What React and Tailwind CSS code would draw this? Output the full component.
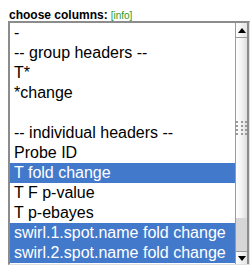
const options = [
  { label: "-" },
  { label: "-- group headers --" },
  { label: "T*" },
  { label: "*change" },
  { label: "\u00a0" },
  { label: "-- individual headers --" },
  { label: "Probe ID" },
  { label: "T fold change", selected: true },
  { label: "T F p-value" },
  { label: "T p-ebayes" },
  { label: "swirl.1.spot.name fold change", selected: true },
  { label: "swirl.2.spot.name fold change", selected: true },
]

export default function App() {
  return (
    <div
      className="w-[252px] h-[272px] bg-white overflow-hidden pl-[8px]"
      style={{ fontFamily: '"Liberation Sans", Arial, sans-serif' }}
    >
      {/* title */}
      <div className="h-[21px] flex items-end gap-[3px] pl-[1px]">
        <span className="text-[12px] leading-none font-bold text-black">choose columns:</span>
        <span className="text-[10px] leading-none text-[#1f9a1f]">[info]</span>
      </div>

      {/* select box */}
      <div className="w-[242px] h-[244px] flex border-t-2 border-l-2 border-[#8c8c8c] border-r border-b border-r-[#e0e0e0] border-b-[#e0e0e0]">
        <div className="flex-1 overflow-hidden">
          {options.map((o, i) => (
            <div
              key={i}
              className={
                "h-[20px] leading-[20px] text-[16px] pl-[4px] whitespace-nowrap " +
                (o.selected ? "bg-[#4279cb] text-white" : "text-black")
              }
            >
              {o.label}
            </div>
          ))}
        </div>

        {/* scrollbar */}
        <div className="w-[14px] flex flex-col border-l border-[#9a9a9a] border-r-2 border-r-[#8c8c8c]">
          <div className="h-[15px] flex items-center justify-center bg-gradient-to-r from-white to-[#e4e4e4] border-b border-[#9a9a9a]">
            <svg width="8" height="5" viewBox="0 0 8 5">
              <path d="M0 5 L4 0 L8 5 Z" fill="#000" />
            </svg>
          </div>
          <div className="h-[180px] flex items-center justify-center bg-gradient-to-r from-white via-[#f4f4f4] to-[#dedede]">
            <div className="grid grid-cols-3 gap-x-[3px] gap-y-[2px]">
              {Array.from({ length: 12 }).map((_, i) => (
                <div key={i} className="w-[2px] h-[2px] bg-[#9a9a9a]" />
              ))}
            </div>
          </div>
          <div className="flex-1 bg-[#d6d6d6]" />
          <div className="h-[13px] flex items-center justify-center bg-gradient-to-r from-white to-[#e4e4e4] border-t border-[#9a9a9a]">
            <svg width="8" height="5" viewBox="0 0 8 5">
              <path d="M0 0 L8 0 L4 5 Z" fill="#000" />
            </svg>
          </div>
        </div>
      </div>
    </div>
  )
}
